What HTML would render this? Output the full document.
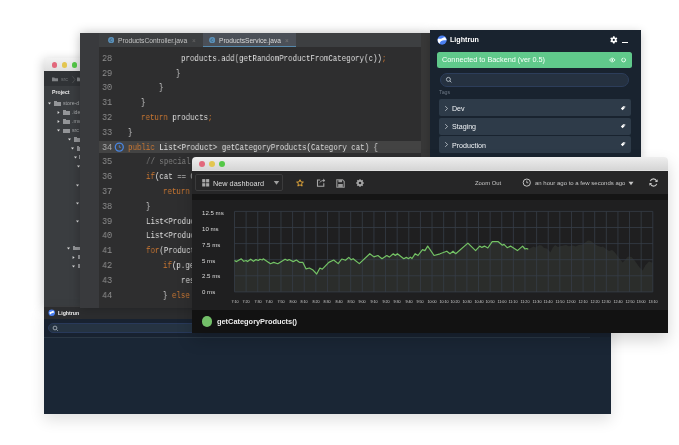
<!DOCTYPE html><html><head><meta charset="utf-8"><style>
*{margin:0;padding:0;box-sizing:border-box}
html,body{width:679px;height:445px;overflow:hidden;background:#fff;font-family:"Liberation Sans",sans-serif}
div,span.a,svg{position:absolute}
.t{white-space:pre;line-height:1;will-change:transform}
.tl{border-radius:50%}
.mono{font-family:"Liberation Mono",monospace;white-space:pre;line-height:1;transform-origin:0 0;will-change:transform}
.k{color:#cc7832}
.cm{color:#7f7f7f}
</style></head><body>
<div style="left:44px;top:57.5px;width:60px;height:249px;background:#3a3d40;box-shadow:-1px 2px 10px rgba(0,0,0,.2)"></div>
<div style="left:44px;top:57.5px;width:60px;height:13.3px;background:linear-gradient(#f2f2f2,#dedede)"></div>
<div style="left:51.699999999999996px;top:62.2px;width:5.4px;height:5.4px;border-radius:50%;background:#e2687c"></div>
<div style="left:61.599999999999994px;top:62.2px;width:5.4px;height:5.4px;border-radius:50%;background:#e3c651"></div>
<div style="left:71.5px;top:62.2px;width:5.4px;height:5.4px;border-radius:50%;background:#54c847"></div>
<div style="left:44px;top:70.8px;width:60px;height:15px;background:#303336"></div>
<svg style="left:50px;top:75px" width="30" height="10" viewBox="0 0 30 10"><path d="M2 2.6H4.3L5 3.3H8V6.2H2Z" fill="#808386"/><path d="M22.4 1.2L25 4.6L22.4 8" fill="none" stroke="#5c5f62" stroke-width="0.6"/><path d="M27 2.6H29.3L30 3.3V6.2H27Z" fill="#808386"/></svg>
<div class="t" style="left:60.8px;top:77.20px;font-size:5.2px;color:#74777a;">src</div>
<div class="t" style="left:51.9px;top:89.90px;font-size:5.2px;color:#e8e8e8;font-weight:bold;">Project</div>
<svg style="left:48.3px;top:102.0px" width="3" height="3" viewBox="0 0 3 3"><path d="M0 0.6H3L1.5 2.6Z" fill="#dadada"/></svg>
<div style="left:53.9px;top:102.0px;width:7.0px;height:3.7px;background:#939598"></div>
<div style="left:53.9px;top:101.4px;width:2.8px;height:0.7px;background:#939598"></div>
<div class="t" style="left:63.0px;top:101.00px;font-size:5.2px;color:#a4a6a8;">store-d</div>
<svg style="left:57.2px;top:111.0px" width="3" height="3" viewBox="0 0 3 3"><path d="M0.6 0L2.6 1.5L0.6 3Z" fill="#dadada"/></svg>
<div style="left:62.9px;top:111.0px;width:7.0px;height:3.7px;background:#939598"></div>
<div style="left:62.9px;top:110.4px;width:2.8px;height:0.7px;background:#939598"></div>
<div class="t" style="left:72.0px;top:110.00px;font-size:5.2px;color:#a4a6a8;">.idea</div>
<svg style="left:57.2px;top:120.0px" width="3" height="3" viewBox="0 0 3 3"><path d="M0.6 0L2.6 1.5L0.6 3Z" fill="#dadada"/></svg>
<div style="left:62.9px;top:120.0px;width:7.0px;height:3.7px;background:#939598"></div>
<div style="left:62.9px;top:119.4px;width:2.8px;height:0.7px;background:#939598"></div>
<div class="t" style="left:72.0px;top:119.00px;font-size:5.2px;color:#a4a6a8;">.mvn</div>
<svg style="left:57.2px;top:129.4px" width="3" height="3" viewBox="0 0 3 3"><path d="M0 0.6H3L1.5 2.6Z" fill="#dadada"/></svg>
<div style="left:62.9px;top:129.4px;width:7.0px;height:3.7px;background:#939598"></div>
<div style="left:62.9px;top:128.8px;width:2.8px;height:0.7px;background:#939598"></div>
<div class="t" style="left:72.0px;top:128.40px;font-size:5.2px;color:#a4a6a8;">src</div>
<svg style="left:67.8px;top:137.9px" width="3" height="3" viewBox="0 0 3 3"><path d="M0 0.6H3L1.5 2.6Z" fill="#dadada"/></svg>
<div style="left:73.8px;top:137.9px;width:7.0px;height:3.7px;background:#939598"></div>
<div style="left:73.8px;top:137.3px;width:2.8px;height:0.7px;background:#939598"></div>
<svg style="left:70.8px;top:146.9px" width="3" height="3" viewBox="0 0 3 3"><path d="M0 0.6H3L1.5 2.6Z" fill="#dadada"/></svg>
<div style="left:76.7px;top:146.9px;width:7.0px;height:3.7px;background:#939598"></div>
<div style="left:76.7px;top:146.3px;width:2.8px;height:0.7px;background:#939598"></div>
<svg style="left:73.7px;top:155.5px" width="3" height="3" viewBox="0 0 3 3"><path d="M0 0.6H3L1.5 2.6Z" fill="#dadada"/></svg>
<div style="left:79px;top:155.5px;width:7.0px;height:3.7px;background:#939598"></div>
<div style="left:79px;top:154.9px;width:2.8px;height:0.7px;background:#939598"></div>
<svg style="left:76.5px;top:164.9px" width="3" height="3" viewBox="0 0 3 3"><path d="M0 0.6H3L1.5 2.6Z" fill="#dadada"/></svg>
<svg style="left:76.3px;top:183.5px" width="3" height="3" viewBox="0 0 3 3"><path d="M0 0.6H3L1.5 2.6Z" fill="#dadada"/></svg>
<svg style="left:76.3px;top:201.5px" width="3" height="3" viewBox="0 0 3 3"><path d="M0 0.6H3L1.5 2.6Z" fill="#dadada"/></svg>
<svg style="left:76.3px;top:219.5px" width="3" height="3" viewBox="0 0 3 3"><path d="M0 0.6H3L1.5 2.6Z" fill="#dadada"/></svg>
<svg style="left:67.3px;top:246.5px" width="3" height="3" viewBox="0 0 3 3"><path d="M0 0.6H3L1.5 2.6Z" fill="#dadada"/></svg>
<div style="left:72.5px;top:246.5px;width:7.0px;height:3.7px;background:#939598"></div>
<div style="left:72.5px;top:245.9px;width:2.8px;height:0.7px;background:#939598"></div>
<svg style="left:71.5px;top:255.5px" width="3" height="3" viewBox="0 0 3 3"><path d="M0.6 0L2.6 1.5L0.6 3Z" fill="#dadada"/></svg>
<div style="left:78px;top:255.5px;width:7.0px;height:3.7px;background:#939598"></div>
<div style="left:78px;top:254.9px;width:2.8px;height:0.7px;background:#939598"></div>
<svg style="left:71.5px;top:264.5px" width="3" height="3" viewBox="0 0 3 3"><path d="M0 0.6H3L1.5 2.6Z" fill="#dadada"/></svg>
<div style="left:78px;top:264.5px;width:7.0px;height:3.7px;background:#939598"></div>
<div style="left:78px;top:263.9px;width:2.8px;height:0.7px;background:#939598"></div>
<div style="left:44px;top:306px;width:567px;height:108px;background:#1a2635;box-shadow:0 6px 14px rgba(0,0,0,.12)"></div>
<div style="left:44px;top:306px;width:567px;height:13.2px;background:#2c2d2f;border-top:1px solid #3a3b3d"></div>
<div style="left:44px;top:319.2px;width:567px;height:18px;background:#182230"></div>
<div style="left:48.3px;top:322.6px;width:556px;height:10.6px;background:#253342;border-radius:5.3px;border:1px solid #28395a"></div>
<div style="left:44px;top:337px;width:546px;height:1px;background:#2a3744"></div>
<svg style="left:47.80px;top:309.20px" width="7.60" height="7.60" viewBox="-3.80 -3.80 7.60 7.60"><defs><clipPath id="c516"><circle r="3.3"/></clipPath></defs><circle r="3.3" fill="#4a7ff0"/><g clip-path="url(#c516)" transform="scale(0.702)"><path d="M-5 -1.6C-3 -1.2 -1.5 -1.0 0.5 -2.2C1.8 -3.0 3.2 -2.9 3.6 -2.4C3.4 -1.9 4.2 -1.2 5 -0.6L5 0.1C3 0.1 1.0 0.1 -0.8 0.9C-1.8 1.4 -2.0 2.6 -2.6 3.4L-5 3.2Z" fill="#fff"/></g></svg>
<div class="t" style="left:57.7px;top:310.55px;font-size:5.25px;color:#f0f0f0;font-weight:bold;">Lightrun</div>
<svg style="left:51.5px;top:324.8px" width="7" height="7" viewBox="0 0 7 7"><circle cx="3" cy="3" r="1.9" fill="none" stroke="#b8c0c8" stroke-width="0.75"/><path d="M4.4 4.4L5.8 5.8" stroke="#b8c0c8" stroke-width="0.75"/></svg>
<div style="left:80px;top:33.4px;width:350px;height:274.2px;background:#2e2e2f;box-shadow:0 0 10px rgba(0,0,0,.26)"></div>
<div style="left:80px;top:33.4px;width:19px;height:274.2px;background:#393a3d"></div>
<div style="left:99px;top:33.4px;width:322px;height:13.8px;background:#3d3f41"></div>
<div style="left:421px;top:33.4px;width:9px;height:274.2px;background:#383838"></div>
<div style="left:202.8px;top:33.4px;width:93px;height:13.8px;background:#4b5058"></div>
<div style="left:202.8px;top:46.0px;width:93px;height:1.2px;background:#5688ab"></div>
<svg style="left:107.6px;top:37.1px" width="6.4" height="6.4" viewBox="0 0 6.4 6.4"><circle cx="3.2" cy="3.2" r="3.1" fill="#5b90b8"/><path d="M4.3 2.4A1.3 1.3 0 1 0 4.3 4" fill="none" stroke="#3a5f7a" stroke-width="0.8"/></svg>
<svg style="left:208.6px;top:37.1px" width="6.4" height="6.4" viewBox="0 0 6.4 6.4"><circle cx="3.2" cy="3.2" r="3.1" fill="#5b90b8"/><path d="M4.3 2.4A1.3 1.3 0 1 0 4.3 4" fill="none" stroke="#3a5f7a" stroke-width="0.8"/></svg>
<div class="t" style="left:117.8px;top:37.63px;font-size:6.7px;color:#c4c4c4;">ProductsController.java</div>
<div class="t" style="left:218.9px;top:37.71px;font-size:6.6px;color:#dadada;">ProductsService.java</div>
<div class="t" style="left:191.5px;top:37.80px;font-size:6.5px;color:#6a6a6a;">×</div>
<div class="t" style="left:285.0px;top:37.80px;font-size:6.5px;color:#7a7a7a;">×</div>
<div style="left:99px;top:140.9px;width:322px;height:12.4px;background:#434343"></div>
<svg style="left:114px;top:142px" width="11" height="11" viewBox="0 0 11 11"><circle cx="5.3" cy="5.1" r="4" fill="none" stroke="#4a86e0" stroke-width="1.3"/><path d="M5.3 3.2V5.3H6.8" fill="none" stroke="#4a86e0" stroke-width="0.9"/></svg>
<div class="mono" style="left:101.6px;top:53.72px;font-size:9.5px;color:#909090;transform:scaleX(0.88);">28</div>
<div class="mono" style="left:181.0px;top:53.72px;font-size:9.5px;color:#dedede;transform:scaleX(0.783);">products.add(getRandomProductFromCategory(c))<span class="k">;</span></div>
<div class="mono" style="left:101.6px;top:68.52px;font-size:9.5px;color:#909090;transform:scaleX(0.88);">29</div>
<div class="mono" style="left:176.4px;top:68.52px;font-size:9.5px;color:#dedede;transform:scaleX(0.783);">}</div>
<div class="mono" style="left:101.6px;top:83.32px;font-size:9.5px;color:#909090;transform:scaleX(0.88);">30</div>
<div class="mono" style="left:158.8px;top:83.32px;font-size:9.5px;color:#dedede;transform:scaleX(0.783);">}</div>
<div class="mono" style="left:101.6px;top:98.12px;font-size:9.5px;color:#909090;transform:scaleX(0.88);">31</div>
<div class="mono" style="left:141.0px;top:98.12px;font-size:9.5px;color:#dedede;transform:scaleX(0.783);">}</div>
<div class="mono" style="left:101.6px;top:112.92px;font-size:9.5px;color:#909090;transform:scaleX(0.88);">32</div>
<div class="mono" style="left:141.0px;top:112.92px;font-size:9.5px;color:#dedede;transform:scaleX(0.783);"><span class="k">return</span> products<span class="k">;</span></div>
<div class="mono" style="left:101.6px;top:127.72px;font-size:9.5px;color:#909090;transform:scaleX(0.88);">33</div>
<div class="mono" style="left:128.0px;top:127.72px;font-size:9.5px;color:#dedede;transform:scaleX(0.783);">}</div>
<div class="mono" style="left:101.6px;top:142.52px;font-size:9.5px;color:#b0b0b0;transform:scaleX(0.88);">34</div>
<div class="mono" style="left:128.0px;top:142.52px;font-size:9.5px;color:#dedede;transform:scaleX(0.783);"><span class="k">public</span> List&lt;Product&gt; getCategoryProducts(Category cat) {</div>
<div class="mono" style="left:101.6px;top:157.32px;font-size:9.5px;color:#909090;transform:scaleX(0.88);">35</div>
<div class="mono" style="left:145.6px;top:157.32px;font-size:9.5px;color:#dedede;transform:scaleX(0.783);"><span class="cm">// special treatment</span></div>
<div class="mono" style="left:101.6px;top:172.12px;font-size:9.5px;color:#909090;transform:scaleX(0.88);">36</div>
<div class="mono" style="left:145.6px;top:172.12px;font-size:9.5px;color:#dedede;transform:scaleX(0.783);"><span class="k">if</span>(cat == Category.ALL) {</div>
<div class="mono" style="left:101.6px;top:186.92px;font-size:9.5px;color:#909090;transform:scaleX(0.88);">37</div>
<div class="mono" style="left:163.4px;top:186.92px;font-size:9.5px;color:#dedede;transform:scaleX(0.783);"><span class="k">return</span> getAll();</div>
<div class="mono" style="left:101.6px;top:201.72px;font-size:9.5px;color:#909090;transform:scaleX(0.88);">38</div>
<div class="mono" style="left:145.6px;top:201.72px;font-size:9.5px;color:#dedede;transform:scaleX(0.783);">}</div>
<div class="mono" style="left:101.6px;top:216.52px;font-size:9.5px;color:#909090;transform:scaleX(0.88);">39</div>
<div class="mono" style="left:145.6px;top:216.52px;font-size:9.5px;color:#dedede;transform:scaleX(0.783);">List&lt;Product&gt; all = getAll();</div>
<div class="mono" style="left:101.6px;top:231.32px;font-size:9.5px;color:#909090;transform:scaleX(0.88);">40</div>
<div class="mono" style="left:145.6px;top:231.32px;font-size:9.5px;color:#dedede;transform:scaleX(0.783);">List&lt;Product&gt; res = new List();</div>
<div class="mono" style="left:101.6px;top:246.12px;font-size:9.5px;color:#909090;transform:scaleX(0.88);">41</div>
<div class="mono" style="left:145.6px;top:246.12px;font-size:9.5px;color:#dedede;transform:scaleX(0.783);"><span class="k">for</span>(Product p : all) {</div>
<div class="mono" style="left:101.6px;top:260.92px;font-size:9.5px;color:#909090;transform:scaleX(0.88);">42</div>
<div class="mono" style="left:163.4px;top:260.92px;font-size:9.5px;color:#dedede;transform:scaleX(0.783);"><span class="k">if</span>(p.getCategory() == cat) {</div>
<div class="mono" style="left:101.6px;top:275.72px;font-size:9.5px;color:#909090;transform:scaleX(0.88);">43</div>
<div class="mono" style="left:181.2px;top:275.72px;font-size:9.5px;color:#dedede;transform:scaleX(0.783);">res.add(p);</div>
<div class="mono" style="left:101.6px;top:290.52px;font-size:9.5px;color:#909090;transform:scaleX(0.88);">44</div>
<div class="mono" style="left:163.4px;top:290.52px;font-size:9.5px;color:#dedede;transform:scaleX(0.783);">} <span class="k">else</span> {</div>
<div style="left:430px;top:30px;width:211px;height:127px;background:#19232f;box-shadow:0 2px 9px rgba(0,0,0,.2)"></div>
<svg style="left:437.30px;top:34.90px" width="10.20" height="10.20" viewBox="-5.10 -5.10 10.20 10.20"><defs><clipPath id="c4424"><circle r="4.6"/></clipPath></defs><circle r="4.6" fill="#4a7ff0"/><g clip-path="url(#c4424)" transform="scale(0.979)"><path d="M-5 -1.6C-3 -1.2 -1.5 -1.0 0.5 -2.2C1.8 -3.0 3.2 -2.9 3.6 -2.4C3.4 -1.9 4.2 -1.2 5 -0.6L5 0.1C3 0.1 1.0 0.1 -0.8 0.9C-1.8 1.4 -2.0 2.6 -2.6 3.4L-5 3.2Z" fill="#fff"/></g></svg>
<div class="t" style="left:450.2px;top:36.55px;font-size:7.15px;color:#fff;font-weight:bold;">Lightrun</div>
<svg style="left:608px;top:34px" width="12" height="12" viewBox="0 0 12 12"><g transform="translate(5.8,5.9)"><circle r="2.6" fill="#fff"/><g fill="#fff"><rect x="-0.85" y="-3.6" width="1.7" height="7.2" rx="0.3"/><rect x="-0.85" y="-3.6" width="1.7" height="7.2" rx="0.3" transform="rotate(60)"/><rect x="-0.85" y="-3.6" width="1.7" height="7.2" rx="0.3" transform="rotate(120)"/></g><circle r="1.1" fill="#19232f"/></g></svg>
<div style="left:622px;top:42px;width:6px;height:1.4px;background:#fff"></div>
<div style="left:437px;top:51.7px;width:195px;height:16.8px;background:#60c98b;border-radius:2.5px"></div>
<div class="t" style="left:442.4px;top:56.42px;font-size:7.3px;color:#f8fffa;">Connected to Backend (ver 0.5)</div>
<svg style="left:607px;top:56px" width="20" height="8" viewBox="0 0 20 8"><path d="M2.6 4C3.6 2.6 4.4 2.2 5.3 2.2C6.2 2.2 7 2.6 8 4C7 5.4 6.2 5.8 5.3 5.8C4.4 5.8 3.6 5.4 2.6 4Z" fill="none" stroke="#f0fff4" stroke-width="0.9"/><circle cx="5.3" cy="4" r="0.9" fill="#f0fff4"/><circle cx="16.6" cy="4" r="1.9" fill="none" stroke="#f0fff4" stroke-width="0.9"/><path d="M16.3 1.3L18 2.1L16.5 2.9Z" fill="#60c98b"/></svg>
<div style="left:439.6px;top:72.8px;width:189.4px;height:14px;background:#253140;border:1px solid #2c3d5a;border-radius:7px"></div>
<svg style="left:445.3px;top:76.2px" width="8" height="8" viewBox="0 0 8 8"><circle cx="3.4" cy="3.4" r="2.0" fill="none" stroke="#c8d0d8" stroke-width="0.8"/><path d="M4.9 4.9L6.4 6.4" stroke="#c8d0d8" stroke-width="0.8"/></svg>
<div class="t" style="left:439.2px;top:90.41px;font-size:5.3px;color:#6c7784;">Tags</div>
<div style="left:439px;top:99.4px;width:192px;height:16.799999999999997px;background:#2e3b49;border-radius:2px"></div>
<svg style="left:444px;top:104.8px" width="5" height="7" viewBox="0 0 5 7"><path d="M1.2 1.2L3.6 3.5L1.2 5.8" fill="none" stroke="#c3c9d0" stroke-width="0.8"/></svg>
<div class="t" style="left:452px;top:105.79px;font-size:7.1px;color:#f0f3f6;">Dev</div>
<svg style="left:618.6px;top:103.8px" width="8" height="8" viewBox="0 0 8 8"><g transform="translate(4,4) scale(0.78) translate(-4,-4)"><path d="M1.3 4.6L4.6 1.3H6.8V3.5L3.5 6.8Z" fill="#fff"/><circle cx="5.5" cy="2.6" r="0.7" fill="#2e3b49"/></g></svg>
<div style="left:439px;top:117.6px;width:192px;height:17.099999999999994px;background:#2e3b49;border-radius:2px"></div>
<svg style="left:444px;top:123.1px" width="5" height="7" viewBox="0 0 5 7"><path d="M1.2 1.2L3.6 3.5L1.2 5.8" fill="none" stroke="#c3c9d0" stroke-width="0.8"/></svg>
<div class="t" style="left:452px;top:124.44px;font-size:7.1px;color:#f0f3f6;">Staging</div>
<svg style="left:618.6px;top:122.1px" width="8" height="8" viewBox="0 0 8 8"><g transform="translate(4,4) scale(0.78) translate(-4,-4)"><path d="M1.3 4.6L4.6 1.3H6.8V3.5L3.5 6.8Z" fill="#fff"/><circle cx="5.5" cy="2.6" r="0.7" fill="#2e3b49"/></g></svg>
<div style="left:439px;top:136.2px;width:192px;height:16.5px;background:#2e3b49;border-radius:2px"></div>
<svg style="left:444px;top:141.4px" width="5" height="7" viewBox="0 0 5 7"><path d="M1.2 1.2L3.6 3.5L1.2 5.8" fill="none" stroke="#c3c9d0" stroke-width="0.8"/></svg>
<div class="t" style="left:452px;top:143.24px;font-size:7.1px;color:#f0f3f6;">Production</div>
<svg style="left:618.6px;top:140.4px" width="8" height="8" viewBox="0 0 8 8"><g transform="translate(4,4) scale(0.78) translate(-4,-4)"><path d="M1.3 4.6L4.6 1.3H6.8V3.5L3.5 6.8Z" fill="#fff"/><circle cx="5.5" cy="2.6" r="0.7" fill="#2e3b49"/></g></svg>
<div style="left:192px;top:157px;width:476px;height:175.6px;background:transparent;box-shadow:0 7px 16px rgba(0,0,0,.17);border-radius:4px 4px 0 0"></div>
<div style="left:192px;top:165px;width:476px;height:167.6px;background:#1f1f20"></div>
<div style="left:192px;top:157px;width:476px;height:14px;background:linear-gradient(#eeeeee,#d6d6d6 90%,#e6e6e6);border-radius:4px 4px 0 0"></div>
<div style="left:199.2px;top:161.3px;width:6px;height:6px;border-radius:50%;background:#e2687c"></div>
<div style="left:209.1px;top:161.3px;width:6px;height:6px;border-radius:50%;background:#e3c651"></div>
<div style="left:218.8px;top:161.3px;width:6px;height:6px;border-radius:50%;background:#54c847"></div>
<div style="left:192px;top:171px;width:476px;height:23px;background:#262627"></div>
<div style="left:192px;top:194px;width:476px;height:6px;background:#151515"></div>
<div style="left:192px;top:310px;width:476px;height:22.6px;background:#121212"></div>
<div style="left:195px;top:174px;width:87.7px;height:17px;background:#262627;border:1px solid #3b3b3c;border-radius:2px"></div>
<svg style="left:201.5px;top:179px" width="8" height="8" viewBox="0 0 8 8"><g fill="#a8a8a8"><rect x="0.2" y="0.1" width="3.1" height="3.3"/><rect x="4.1" y="0.1" width="3.1" height="3.3"/><rect x="0.2" y="4.2" width="3.1" height="3.3"/><rect x="4.1" y="4.2" width="3.1" height="3.3"/></g></svg>
<div class="t" style="left:212.8px;top:180.12px;font-size:7.3px;color:#dcdcdc;">New dashboard</div>
<svg style="left:273px;top:180px" width="7" height="6" viewBox="0 0 7 6"><path d="M0.8 1H6.2L3.5 4.8Z" fill="#a0a0a0"/></svg>
<svg style="left:295.3px;top:178px" width="10" height="10" viewBox="0 0 10 10"><g transform="translate(5,5.1) scale(0.82) translate(-5.5,-5)"><path d="M5.5 0.9L6.7 3.6L9.6 3.8L7.4 5.7L8.1 8.6L5.5 7.1L2.9 8.6L3.6 5.7L1.4 3.8L4.3 3.6Z" fill="none" stroke="#e3a73a" stroke-width="1.2" stroke-linejoin="round"/></g></svg>
<svg style="left:315.5px;top:178px" width="10" height="10" viewBox="0 0 10 10"><path d="M7.8 5.3V8.2H1.5V2H4.2" fill="none" stroke="#a8a8a8" stroke-width="1.1"/><path d="M3.2 6.6C3.6 4.2 5.2 3.2 7.3 3.1V4.6L9.2 2.5L7.3 0.6V1.9C5 2 3.3 3.8 3.2 6.6Z" fill="#a8a8a8"/></svg>
<svg style="left:336px;top:178.5px" width="9" height="9" viewBox="0 0 9 9"><path d="M0.8 0.8H6.6L8.2 2.4V8.2H0.8Z" fill="none" stroke="#9a9a9a" stroke-width="1.1"/><rect x="2.4" y="1" width="3.6" height="2.2" fill="#9a9a9a"/><rect x="2.2" y="5" width="4.6" height="3" fill="#9a9a9a"/></svg>
<svg style="left:354.8px;top:178px" width="10" height="10" viewBox="0 0 10 10"><g transform="translate(5,5)"><circle r="2.9" fill="#a8a8a8"/><g fill="#a8a8a8"><rect x="-0.8" y="-3.8" width="1.6" height="7.6" rx="0.3"/><rect x="-0.8" y="-3.8" width="1.6" height="7.6" rx="0.3" transform="rotate(45)"/><rect x="-0.8" y="-3.8" width="1.6" height="7.6" rx="0.3" transform="rotate(90)"/><rect x="-0.8" y="-3.8" width="1.6" height="7.6" rx="0.3" transform="rotate(135)"/></g><circle r="1.3" fill="#262627"/></g></svg>
<div class="t" style="left:475.2px;top:181.00px;font-size:5.9px;color:#c4c4c4;">Zoom Out</div>
<svg style="left:522.4px;top:178.2px" width="10" height="10" viewBox="0 0 10 10"><circle cx="4.8" cy="4.6" r="3.6" fill="none" stroke="#c4c4c4" stroke-width="1"/><path d="M4.8 2.6V4.8H6.3" fill="none" stroke="#c4c4c4" stroke-width="0.9"/></svg>
<div class="t" style="left:534.8px;top:180.12px;font-size:6.0px;color:#c4c4c4;">an hour ago to a few seconds ago</div>
<svg style="left:628px;top:180.5px" width="6" height="5" viewBox="0 0 6 5"><path d="M0.5 0.8H5.5L3 4.3Z" fill="#c4c4c4"/></svg>
<svg style="left:648.2px;top:177.0px" width="11" height="11" viewBox="0 0 11 11"><path d="M8.6 4.3A3.3 3.3 0 0 0 2.3 4.1" fill="none" stroke="#c8c8c8" stroke-width="1.1"/><path d="M2.4 6.7A3.3 3.3 0 0 0 8.7 6.9" fill="none" stroke="#c8c8c8" stroke-width="1.1"/><path d="M9.6 2.2V5H6.9Z" fill="#c8c8c8"/><path d="M1.4 8.8V6H4.1Z" fill="#c8c8c8"/></svg>
<svg style="left:0;top:0" width="679" height="445"><polygon points="234.5,260.5 236.5,261.6 241.3,258.8 243.8,261.3 246.2,260.5 247.5,261.6 250.7,259.2 253.5,261.3 255.9,259.6 258.3,260.5 260,259.2 262.4,260 263.2,258.8 270.5,263.7 273.7,262.4 277.8,263.7 285.1,259.2 287.5,260.5 289.1,259.5 293.2,261.6 296.4,260 299.7,262.4 302.9,262.4 306.1,268.9 309.4,268 312.6,269.7 316.7,274 319.9,268 322.3,269.2 328.8,262.4 333.7,260 338.2,263.6 341.8,259 345.5,260.3 348.8,257.4 351.2,259.8 353.1,258.7 359.3,263.6 369.8,253.7 373.9,256.9 377.9,255.5 382,258.7 386.8,255.5 389.3,257.1 393.3,253.8 395.3,255.5 397.4,253.7 403.8,258.7 406.3,257.4 408.7,258.7 410.3,257.1 412,258.5 415.2,253.7 418,255.5 422.5,249.6 424.9,250.6 427.7,246.1 434.1,255.5 440,253.8 446.8,251.2 450,253.7 453,251.2 455.7,253.7 467.9,243.1 475.6,250.6 479.7,246.1 481.8,247.4 484.5,246.1 487.8,248 492.2,241.7 498.3,241.7 502.4,245.2 504,244.4 507.2,247.7 510.5,246.1 517.4,250.6 522.6,246.1 525,249 526.7,248.5 528.3,249.3 530.7,248 533.6,246.5 535.5,247.5 539.4,245.1 541.7,245.6 544.1,248 547,248.4 550.4,252.3 552.8,247.5 555.1,245.1 558,247 560.9,246 563.3,245.6 566.1,245.1 569,246.3 572.8,245.6 575.7,246.5 578.6,245.1 582.4,244.6 586.2,241.7 588,240.5 591,241 594,243.5 597,245.5 601,247 603,246.5 605.5,248.5 609,251 612,250 614.5,252 618,256.5 622.6,262.5 625,260 628,256.5 631.6,257 635,261 639.6,267.5 642.6,270.5 645.6,265 649,261.5 652,262.5 652.8,262.6 652.8,291.9 234.5,291.9" fill="#2b2d2b"/><line x1="234.5" y1="211.40" x2="652.8" y2="211.40" stroke="#363d47" stroke-width="0.8"/><line x1="234.5" y1="227.50" x2="652.8" y2="227.50" stroke="#363d47" stroke-width="0.8"/><line x1="234.5" y1="243.60" x2="652.8" y2="243.60" stroke="#363d47" stroke-width="0.8"/><line x1="234.5" y1="259.70" x2="652.8" y2="259.70" stroke="#363d47" stroke-width="0.8"/><line x1="234.5" y1="275.80" x2="652.8" y2="275.80" stroke="#363d47" stroke-width="0.8"/><line x1="234.5" y1="291.90" x2="652.8" y2="291.90" stroke="#363d47" stroke-width="0.8"/><line x1="234.50" y1="211.4" x2="234.50" y2="291.9" stroke="#363d47" stroke-width="0.8"/><line x1="246.12" y1="211.4" x2="246.12" y2="291.9" stroke="#363d47" stroke-width="0.8"/><line x1="257.74" y1="211.4" x2="257.74" y2="291.9" stroke="#363d47" stroke-width="0.8"/><line x1="269.36" y1="211.4" x2="269.36" y2="291.9" stroke="#363d47" stroke-width="0.8"/><line x1="280.98" y1="211.4" x2="280.98" y2="291.9" stroke="#363d47" stroke-width="0.8"/><line x1="292.60" y1="211.4" x2="292.60" y2="291.9" stroke="#363d47" stroke-width="0.8"/><line x1="304.22" y1="211.4" x2="304.22" y2="291.9" stroke="#363d47" stroke-width="0.8"/><line x1="315.84" y1="211.4" x2="315.84" y2="291.9" stroke="#363d47" stroke-width="0.8"/><line x1="327.46" y1="211.4" x2="327.46" y2="291.9" stroke="#363d47" stroke-width="0.8"/><line x1="339.07" y1="211.4" x2="339.07" y2="291.9" stroke="#363d47" stroke-width="0.8"/><line x1="350.69" y1="211.4" x2="350.69" y2="291.9" stroke="#363d47" stroke-width="0.8"/><line x1="362.31" y1="211.4" x2="362.31" y2="291.9" stroke="#363d47" stroke-width="0.8"/><line x1="373.93" y1="211.4" x2="373.93" y2="291.9" stroke="#363d47" stroke-width="0.8"/><line x1="385.55" y1="211.4" x2="385.55" y2="291.9" stroke="#363d47" stroke-width="0.8"/><line x1="397.17" y1="211.4" x2="397.17" y2="291.9" stroke="#363d47" stroke-width="0.8"/><line x1="408.79" y1="211.4" x2="408.79" y2="291.9" stroke="#363d47" stroke-width="0.8"/><line x1="420.41" y1="211.4" x2="420.41" y2="291.9" stroke="#363d47" stroke-width="0.8"/><line x1="432.03" y1="211.4" x2="432.03" y2="291.9" stroke="#363d47" stroke-width="0.8"/><line x1="443.65" y1="211.4" x2="443.65" y2="291.9" stroke="#363d47" stroke-width="0.8"/><line x1="455.27" y1="211.4" x2="455.27" y2="291.9" stroke="#363d47" stroke-width="0.8"/><line x1="466.89" y1="211.4" x2="466.89" y2="291.9" stroke="#363d47" stroke-width="0.8"/><line x1="478.51" y1="211.4" x2="478.51" y2="291.9" stroke="#363d47" stroke-width="0.8"/><line x1="490.13" y1="211.4" x2="490.13" y2="291.9" stroke="#363d47" stroke-width="0.8"/><line x1="501.75" y1="211.4" x2="501.75" y2="291.9" stroke="#363d47" stroke-width="0.8"/><line x1="513.37" y1="211.4" x2="513.37" y2="291.9" stroke="#363d47" stroke-width="0.8"/><line x1="524.99" y1="211.4" x2="524.99" y2="291.9" stroke="#363d47" stroke-width="0.8"/><line x1="536.61" y1="211.4" x2="536.61" y2="291.9" stroke="#363d47" stroke-width="0.8"/><line x1="548.22" y1="211.4" x2="548.22" y2="291.9" stroke="#363d47" stroke-width="0.8"/><line x1="559.84" y1="211.4" x2="559.84" y2="291.9" stroke="#363d47" stroke-width="0.8"/><line x1="571.46" y1="211.4" x2="571.46" y2="291.9" stroke="#363d47" stroke-width="0.8"/><line x1="583.08" y1="211.4" x2="583.08" y2="291.9" stroke="#363d47" stroke-width="0.8"/><line x1="594.70" y1="211.4" x2="594.70" y2="291.9" stroke="#363d47" stroke-width="0.8"/><line x1="606.32" y1="211.4" x2="606.32" y2="291.9" stroke="#363d47" stroke-width="0.8"/><line x1="617.94" y1="211.4" x2="617.94" y2="291.9" stroke="#363d47" stroke-width="0.8"/><line x1="629.56" y1="211.4" x2="629.56" y2="291.9" stroke="#363d47" stroke-width="0.8"/><line x1="641.18" y1="211.4" x2="641.18" y2="291.9" stroke="#363d47" stroke-width="0.8"/><line x1="652.80" y1="211.4" x2="652.80" y2="291.9" stroke="#363d47" stroke-width="0.8"/><polyline points="234.5,260.5 236.5,261.6 241.3,258.8 243.8,261.3 246.2,260.5 247.5,261.6 250.7,259.2 253.5,261.3 255.9,259.6 258.3,260.5 260,259.2 262.4,260 263.2,258.8 270.5,263.7 273.7,262.4 277.8,263.7 285.1,259.2 287.5,260.5 289.1,259.5 293.2,261.6 296.4,260 299.7,262.4 302.9,262.4 306.1,268.9 309.4,268 312.6,269.7 316.7,274 319.9,268 322.3,269.2 328.8,262.4 333.7,260 338.2,263.6 341.8,259 345.5,260.3 348.8,257.4 351.2,259.8 353.1,258.7 359.3,263.6 369.8,253.7 373.9,256.9 377.9,255.5 382,258.7 386.8,255.5 389.3,257.1 393.3,253.8 395.3,255.5 397.4,253.7 403.8,258.7 406.3,257.4 408.7,258.7 410.3,257.1 412,258.5 415.2,253.7 418,255.5 422.5,249.6 424.9,250.6 427.7,246.1 434.1,255.5 440,253.8 446.8,251.2 450,253.7 453,251.2 455.7,253.7 467.9,243.1 475.6,250.6 479.7,246.1 481.8,247.4 484.5,246.1 487.8,248 492.2,241.7 498.3,241.7 502.4,245.2 504,244.4 507.2,247.7 510.5,246.1 517.4,250.6 522.6,246.1 525,249 526.7,248.5 528.3,249.3" fill="none" stroke="#74c365" stroke-width="1.2" stroke-linejoin="round"/></svg>
<div class="t" style="left:201.9px;top:210.34px;font-size:6.1px;color:#dcdcdc;">12.5 ms</div>
<div class="t" style="left:201.9px;top:226.06px;font-size:6.1px;color:#dcdcdc;">10 ms</div>
<div class="t" style="left:201.9px;top:241.78px;font-size:6.1px;color:#dcdcdc;">7.5 ms</div>
<div class="t" style="left:201.9px;top:257.50px;font-size:6.1px;color:#dcdcdc;">5 ms</div>
<div class="t" style="left:201.9px;top:273.22px;font-size:6.1px;color:#dcdcdc;">2.5 ms</div>
<div class="t" style="left:201.9px;top:288.94px;font-size:6.1px;color:#dcdcdc;">0 ms</div>
<div class="t" style="left:219.50px;top:300.87px;width:30px;text-align:center;font-size:3.7px;color:#d0d0d0">7:10</div>
<div class="t" style="left:231.12px;top:300.87px;width:30px;text-align:center;font-size:3.7px;color:#d0d0d0">7:20</div>
<div class="t" style="left:242.74px;top:300.87px;width:30px;text-align:center;font-size:3.7px;color:#d0d0d0">7:30</div>
<div class="t" style="left:254.36px;top:300.87px;width:30px;text-align:center;font-size:3.7px;color:#d0d0d0">7:40</div>
<div class="t" style="left:265.98px;top:300.87px;width:30px;text-align:center;font-size:3.7px;color:#d0d0d0">7:50</div>
<div class="t" style="left:277.60px;top:300.87px;width:30px;text-align:center;font-size:3.7px;color:#d0d0d0">8:00</div>
<div class="t" style="left:289.22px;top:300.87px;width:30px;text-align:center;font-size:3.7px;color:#d0d0d0">8:10</div>
<div class="t" style="left:300.84px;top:300.87px;width:30px;text-align:center;font-size:3.7px;color:#d0d0d0">8:20</div>
<div class="t" style="left:312.46px;top:300.87px;width:30px;text-align:center;font-size:3.7px;color:#d0d0d0">8:30</div>
<div class="t" style="left:324.07px;top:300.87px;width:30px;text-align:center;font-size:3.7px;color:#d0d0d0">8:40</div>
<div class="t" style="left:335.69px;top:300.87px;width:30px;text-align:center;font-size:3.7px;color:#d0d0d0">8:50</div>
<div class="t" style="left:347.31px;top:300.87px;width:30px;text-align:center;font-size:3.7px;color:#d0d0d0">9:00</div>
<div class="t" style="left:358.93px;top:300.87px;width:30px;text-align:center;font-size:3.7px;color:#d0d0d0">9:10</div>
<div class="t" style="left:370.55px;top:300.87px;width:30px;text-align:center;font-size:3.7px;color:#d0d0d0">9:20</div>
<div class="t" style="left:382.17px;top:300.87px;width:30px;text-align:center;font-size:3.7px;color:#d0d0d0">9:30</div>
<div class="t" style="left:393.79px;top:300.87px;width:30px;text-align:center;font-size:3.7px;color:#d0d0d0">9:40</div>
<div class="t" style="left:405.41px;top:300.87px;width:30px;text-align:center;font-size:3.7px;color:#d0d0d0">9:50</div>
<div class="t" style="left:417.03px;top:300.87px;width:30px;text-align:center;font-size:3.7px;color:#d0d0d0">10:00</div>
<div class="t" style="left:428.65px;top:300.87px;width:30px;text-align:center;font-size:3.7px;color:#d0d0d0">10:10</div>
<div class="t" style="left:440.27px;top:300.87px;width:30px;text-align:center;font-size:3.7px;color:#d0d0d0">10:20</div>
<div class="t" style="left:451.89px;top:300.87px;width:30px;text-align:center;font-size:3.7px;color:#d0d0d0">10:30</div>
<div class="t" style="left:463.51px;top:300.87px;width:30px;text-align:center;font-size:3.7px;color:#d0d0d0">10:40</div>
<div class="t" style="left:475.13px;top:300.87px;width:30px;text-align:center;font-size:3.7px;color:#d0d0d0">10:50</div>
<div class="t" style="left:486.75px;top:300.87px;width:30px;text-align:center;font-size:3.7px;color:#d0d0d0">11:00</div>
<div class="t" style="left:498.37px;top:300.87px;width:30px;text-align:center;font-size:3.7px;color:#d0d0d0">11:10</div>
<div class="t" style="left:509.99px;top:300.87px;width:30px;text-align:center;font-size:3.7px;color:#d0d0d0">11:20</div>
<div class="t" style="left:521.61px;top:300.87px;width:30px;text-align:center;font-size:3.7px;color:#d0d0d0">11:30</div>
<div class="t" style="left:533.22px;top:300.87px;width:30px;text-align:center;font-size:3.7px;color:#d0d0d0">11:40</div>
<div class="t" style="left:544.84px;top:300.87px;width:30px;text-align:center;font-size:3.7px;color:#d0d0d0">11:50</div>
<div class="t" style="left:556.46px;top:300.87px;width:30px;text-align:center;font-size:3.7px;color:#d0d0d0">12:00</div>
<div class="t" style="left:568.08px;top:300.87px;width:30px;text-align:center;font-size:3.7px;color:#d0d0d0">12:10</div>
<div class="t" style="left:579.70px;top:300.87px;width:30px;text-align:center;font-size:3.7px;color:#d0d0d0">12:20</div>
<div class="t" style="left:591.32px;top:300.87px;width:30px;text-align:center;font-size:3.7px;color:#d0d0d0">12:30</div>
<div class="t" style="left:602.94px;top:300.87px;width:30px;text-align:center;font-size:3.7px;color:#d0d0d0">12:40</div>
<div class="t" style="left:614.56px;top:300.87px;width:30px;text-align:center;font-size:3.7px;color:#d0d0d0">12:50</div>
<div class="t" style="left:626.18px;top:300.87px;width:30px;text-align:center;font-size:3.7px;color:#d0d0d0">13:00</div>
<div class="t" style="left:637.80px;top:300.87px;width:30px;text-align:center;font-size:3.7px;color:#d0d0d0">13:10</div>
<div style="left:201.6px;top:315.90000000000003px;width:10.8px;height:10.8px;border-radius:50%;background:#73bf69"></div>
<div class="t" style="left:216.8px;top:317.73px;font-size:7.4px;color:#ececec;font-weight:bold;">getCategoryProducts()</div>
</body></html>
